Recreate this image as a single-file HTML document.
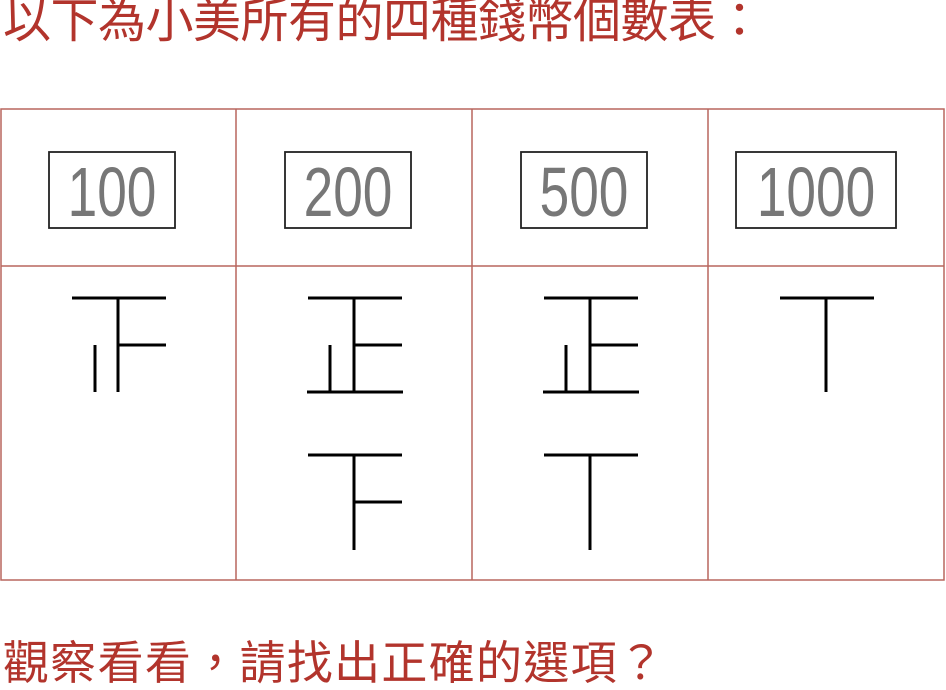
<!DOCTYPE html>
<html><head><meta charset="utf-8"><style>
html,body{margin:0;padding:0;background:#fff;width:946px;height:690px;overflow:hidden}
.t{position:absolute;left:3px;font-family:"Liberation Sans","Noto Sans CJK TC",sans-serif;color:#b2342c;white-space:nowrap;line-height:1}
</style></head><body>
<div class="t" style="top:-2px;font-size:48px;letter-spacing:-0.5px">以下為小美所有的四種錢幣個數表：</div>
<div class="t" style="top:640px;font-size:46px;letter-spacing:1.3px">觀察看看，請找出正確的選項？</div>
<svg width="946" height="690" style="position:absolute;left:0;top:0" xmlns="http://www.w3.org/2000/svg">
<g stroke="#b8675f" stroke-width="1.5" fill="none">
<rect x="1" y="109" width="943" height="471"/>
<line x1="236" y1="109" x2="236" y2="580"/>
<line x1="472" y1="109" x2="472" y2="580"/>
<line x1="708" y1="109" x2="708" y2="580"/>
<line x1="1" y1="266" x2="944" y2="266"/>
</g>
<g stroke="#222" stroke-width="1.8" fill="none">
<rect x="49" y="152" width="126" height="76"/>
<rect x="285" y="152" width="126" height="76"/>
<rect x="521" y="152" width="126" height="76"/>
<rect x="736" y="152" width="160" height="76"/>
</g>
<g font-family="Liberation Sans,sans-serif" font-size="70" fill="#777" text-anchor="middle">
<text x="112" y="216" transform="translate(112 0) scale(0.76 1) translate(-112 0)">100</text>
<text x="348" y="216" transform="translate(348 0) scale(0.76 1) translate(-348 0)">200</text>
<text x="584" y="216" transform="translate(584 0) scale(0.76 1) translate(-584 0)">500</text>
<text x="816" y="216" transform="translate(816 0) scale(0.76 1) translate(-816 0)">1000</text>
</g>
<g stroke="#000" stroke-width="3" fill="none">
<path d="M72 298H166M118 298V392M118 345H166M95 345V392"/>
<path d="M308 298H402M354 298V392M354 345H402M330 345V392M307 392H403"/>
<path d="M308 455H402M354 455V550M354 502H402"/>
<path d="M544 298H638M590 298V392M590 345H638M566 345V392M543 392H639"/>
<path d="M544 455H638M590 455V550"/>
<path d="M780 298H874M826 298V392"/>
</g>
</svg>
</body></html>
